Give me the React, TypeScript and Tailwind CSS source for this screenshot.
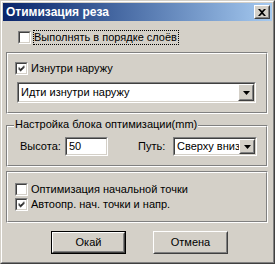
import React from 'react';

const Sunken = ({ className = '', children }: { className?: string; children?: React.ReactNode }) => (
  <div className={`border border-t-[#808080] border-l-[#808080] border-r-white border-b-white ${className}`}>
    <div className="w-full h-full border border-t-[#404040] border-l-[#404040] border-r-[#d4d0c8] border-b-[#d4d0c8] bg-white flex items-center overflow-hidden">
      {children}
    </div>
  </div>
);

const Raised = ({ className = '', children }: { className?: string; children?: React.ReactNode }) => (
  <div className={`border border-t-white border-l-white border-r-[#404040] border-b-[#404040] bg-[#d4d0c8] ${className}`}>
    <div className="w-full h-full border border-t-[#d4d0c8] border-l-[#d4d0c8] border-r-[#808080] border-b-[#808080] flex items-center justify-center">
      {children}
    </div>
  </div>
);

// 7x7 classic check mark, one 3px-tall column per x
const checkCols = [2, 3, 4, 3, 2, 1, 0];

const Check = ({ checked }: { checked?: boolean }) => (
  <Sunken className="w-[13px] h-[13px] shrink-0">
    {checked && (
      <svg width="11" height="11" viewBox="0 0 11 11" className="block">
        {checkCols.map((y, i) => (
          <rect key={i} x={i + 2} y={y + 2} width="1" height="3" fill="#000" />
        ))}
      </svg>
    )}
  </Sunken>
);

const Arrow = () => (
  <svg width="7" height="4" viewBox="0 0 7 4" className="block">
    <path d="M0 0 H7 L3.5 4 Z" fill="#000" />
  </svg>
);

const DropButton = () => (
  <Raised className="w-[16px] h-full shrink-0">
    <Arrow />
  </Raised>
);

const Etched = ({ className = '', children }: { className?: string; children?: React.ReactNode }) => (
  <div className={`relative border border-t-[#808080] border-l-[#808080] border-r-white border-b-white ${className}`}>
    <div className="w-full h-full border border-t-white border-l-white border-r-[#808080] border-b-[#808080]">
      {children}
    </div>
  </div>
);

export default function App() {
  return (
    <div className="w-[275px] h-[264px] bg-[#d4d0c8] border border-t-[#d4d0c8] border-l-[#d4d0c8] border-r-[#404040] border-b-[#404040] font-['Liberation_Sans',Arial,sans-serif] text-[11px] text-black leading-none">
      <div className="w-full h-full border border-t-white border-l-white border-r-[#808080] border-b-[#808080] p-px flex flex-col">
        {/* title bar */}
        <div className="h-[18px] shrink-0 flex items-center bg-linear-to-r from-[#0a246a] to-[#a6caf0] pl-[3px] pr-[2px]">
          <span className="text-white font-bold text-[12px]">Отимизация реза</span>
          <Raised className="ml-auto w-[16px] h-[14px]">
            <svg width="8" height="7" viewBox="0 0 8 7" className="block">
              <path d="M0 0 L2 0 L4 2 L6 0 L8 0 L5 3.5 L8 7 L6 7 L4 5 L2 7 L0 7 L3 3.5 Z" fill="#000" />
            </svg>
          </Raised>
        </div>

        <div className="flex flex-col px-[3px]">
          <div className="mt-[9px] ml-[12px] h-[15px] flex items-center gap-[2px]">
            <Check />
            <span className="h-[15px] border border-dotted border-black flex items-center pr-px">Выполнять в порядке слоёв</span>
          </div>

          <Etched className="mt-[7px] w-[262px] h-[62px]">
            <div className="pt-[8px] pl-[7px] flex flex-col">
              <div className="h-[13px] flex items-center gap-[3px]">
                <Check checked />
                <span>Изнутри наружу</span>
              </div>
              <Sunken className="mt-[7px] ml-[2px] w-[239px] h-[21px]">
                <span className="pl-[2px] flex-1">Идти изнутри наружу</span>
                <DropButton />
              </Sunken>
            </div>
          </Etched>

          <Etched className="mt-[11px] w-[262px] h-[42px]">
            <span className="absolute left-[7px] -top-[7px] px-px bg-[#d4d0c8]">Настройка блока оптимизации(mm)</span>
            <div className="pt-[10px] pl-[12px] flex items-center">
              <span className="w-[45px]">Высота:</span>
              <Sunken className="w-[43px] h-[19px]">
                <span className="pl-[2px]">50</span>
              </Sunken>
              <span className="ml-[30px] w-[35px]">Путь:</span>
              <Sunken className="w-[84px] h-[19px]">
                <span className="pl-[2px] flex-1 whitespace-nowrap overflow-hidden">Сверху вниз</span>
                <DropButton />
              </Sunken>
            </div>
          </Etched>

          <Etched className="mt-[4px] w-[262px] h-[52px]">
            <div className="pt-[10px] pl-[7px] flex flex-col gap-[2px]">
              <div className="h-[13px] flex items-center gap-[3px]">
                <Check />
                <span>Оптимизация начальной точки</span>
              </div>
              <div className="h-[13px] flex items-center gap-[3px]">
                <Check checked />
                <span>Автоопр. нач. точки и напр.</span>
              </div>
            </div>
          </Etched>

          <div className="mt-[8px] ml-[45px] flex gap-[27px]">
            <div className="border border-black">
              <Raised className="w-[73px] h-[21px]">
                <span>Окай</span>
              </Raised>
            </div>
            <Raised className="w-[75px] h-[23px]">
              <span>Отмена</span>
            </Raised>
          </div>
        </div>
      </div>
    </div>
  );
}
